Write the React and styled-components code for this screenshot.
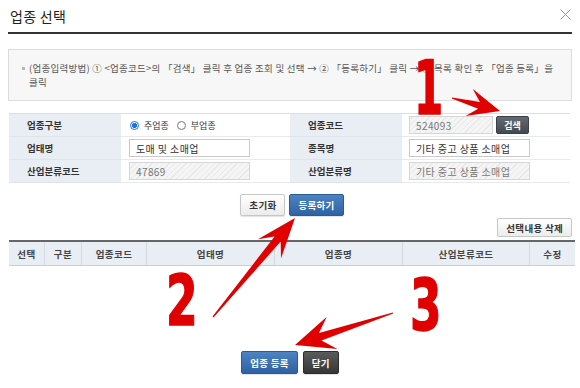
import React from 'react';
import styled, { createGlobalStyle } from 'styled-components';

const GlobalStyle = createGlobalStyle`
  body {
    margin: 0;
    background: #fff;
    font-family: "Noto Sans CJK KR", "Noto Sans", sans-serif;
  }
`;

// arrow drawn as one tapered polygon, tail -> tip
const arrowPoints = (x1, y1, x2, y2, headLen, headW, neckW) => {
  const dx = x2 - x1;
  const dy = y2 - y1;
  const len = Math.hypot(dx, dy);
  const ux = dx / len;
  const uy = dy / len;
  const nx = -uy;
  const ny = ux;
  const bx = x2 - ux * headLen;
  const by = y2 - uy * headLen;
  const kx = x2 - ux * headLen * 0.68;
  const ky = y2 - uy * headLen * 0.68;
  const pts = [
    [x1 + nx * 0.6, y1 + ny * 0.6],
    [kx + nx * neckW / 2, ky + ny * neckW / 2],
    [bx + nx * headW / 2, by + ny * headW / 2],
    [x2, y2],
    [bx - nx * headW / 2, by - ny * headW / 2],
    [kx - nx * neckW / 2, ky - ny * neckW / 2],
    [x1 - nx * 0.6, y1 - ny * 0.6],
  ];
  return pts.map(p => p.map(v => v.toFixed(1)).join(',')).join(' ');
};

const arrows = [
  [452, 98, 500, 111, 32, 28, 7],
  [213, 317, 295, 218, 40, 30, 8],
  [393, 313, 295, 345, 39, 34, 8],
];

const steps = [
  { n: '1', x: 414, y: 51, size: 75, sx: 0.56 },
  { n: '2', x: 166, y: 267, size: 69, sx: 0.66 },
  { n: '3', x: 410, y: 270, size: 71, sx: 0.64 },
];

const listCols = [
  ['선택', 35], ['구분', 36], ['업종코드', 64], ['업태명', 127],
  ['업종명', 127], ['산업분류코드', 126], ['수정', 45],
];

const App = () => (
  <>
    <GlobalStyle />
    <Page>
      <TitleBar>
        <Title>업종 선택</Title>
        <Close width="11" height="11" viewBox="0 0 11 11">
          <path d="M0.5 0.5 L10.5 10.5 M10.5 0.5 L0.5 10.5" stroke="#9a9a9a" strokeWidth="1" />
        </Close>
      </TitleBar>

      <Notice>
        <Bullet />
        <NoticeText>
          (업종입력방법) ① &lt;업종코드&gt;의 「검색」 클릭 후 업종 조회 및 선택 → ② 「등록하기」 클릭 → ③ 목록 확인 후 「업종 등록」을
          <br />
          클릭
        </NoticeText>
      </Notice>

      <FormTable>
        <colgroup>
          <col style={{ width: 112 }} />
          <col style={{ width: 169 }} />
          <col style={{ width: 112 }} />
          <col style={{ width: 168 }} />
        </colgroup>
        <tbody>
          <tr>
            <Th>업종구분</Th>
            <Td>
              <RadioGroup>
                <Radio $checked />
                <RadioLabel>주업종</RadioLabel>
                <Radio />
                <RadioLabel>부업종</RadioLabel>
              </RadioGroup>
            </Td>
            <Th>업종코드</Th>
            <Td $right>
              <Field>
                <Input $w={84} $locked readOnly value="524093" />
                <SearchButton>검색</SearchButton>
              </Field>
            </Td>
          </tr>
          <tr>
            <Th>업태명</Th>
            <Td>
              <Input $w={121} readOnly value="도매 및 소매업" />
            </Td>
            <Th>종목명</Th>
            <Td $right>
              <Input $w={121} readOnly value="기타 중고 상품 소매업" />
            </Td>
          </tr>
          <tr>
            <Th>산업분류코드</Th>
            <Td>
              <Input $w={121} $locked readOnly value="47869" />
            </Td>
            <Th>산업분류명</Th>
            <Td $right>
              <Input $w={121} $locked readOnly value="기타 중고 상품 소매업" />
            </Td>
          </tr>
        </tbody>
      </FormTable>

      <ButtonRow>
        <Button $tone="light">초기화</Button>
        <Button $tone="blue">등록하기</Button>
      </ButtonRow>

      <DeleteButton $tone="light">선택내용 삭제</DeleteButton>

      <ListTable>
        <thead>
          <tr>
            {listCols.map(([label, w]) => (
              <ListTh key={label} style={{ width: w }}>{label}</ListTh>
            ))}
          </tr>
        </thead>
      </ListTable>

      <Footer>
        <Button $tone="blue" $h={23}>업종 등록</Button>
        <Button $tone="dark" $h={23}>닫기</Button>
      </Footer>

      <Overlay width="580" height="388" viewBox="0 0 580 388">
        {arrows.map((a, i) => (
          <polygon key={i} points={arrowPoints(...a)} fill="#e10000" />
        ))}
      </Overlay>
      {steps.map(s => (
        <StepNumber key={s.n} $x={s.x} $y={s.y} $size={s.size} $sx={s.sx}>{s.n}</StepNumber>
      ))}
    </Page>
  </>
);

const Page = styled.div`
  position: relative;
  width: 580px;
  height: 388px;
  box-sizing: border-box;
  padding: 0 8px;
  display: flex;
  flex-direction: column;
  overflow: hidden;
`

const TitleBar = styled.div`
  flex: none;
  height: 32px;
  border-bottom: 2px solid #333;
  display: flex;
  align-items: center;
  justify-content: space-between;
  padding: 0 1px 0 2px;
`

const Title = styled.h1`
  margin: 0;
  font-size: 14px;
  font-weight: 400;
  color: #222;
  letter-spacing: 0.3px;
`

const Close = styled.svg`
  display: block;
  margin-top: -4px;
`

const Notice = styled.div`
  flex: none;
  margin-top: 15px;
  height: 52px;
  box-sizing: border-box;
  border: 1px solid #dcdcdc;
  background: #f7f7f7;
  padding: 11px 14px 0 13px;
  display: flex;
  align-items: flex-start;
  gap: 4px;
  overflow: hidden;
`

const Bullet = styled.span`
  flex: none;
  width: 3px;
  height: 3px;
  margin-top: 6px;
  background: #b5b5b5;
`

const NoticeText = styled.p`
  margin: 0;
  font-size: 9.5px;
  line-height: 14px;
  color: #555;
  letter-spacing: 0.26px;
  white-space: nowrap;
`

const FormTable = styled.table`
  flex: none;
  margin: 12px 0 0 1px;
  width: 561px;
  border-collapse: collapse;
  table-layout: fixed;
  border-top: 1px solid #d9dee7;
  border-bottom: 1px solid #d9dee7;
`

const Th = styled.th`
  height: 22px;
  padding: 0 0 0 18px;
  background: #e9edf4;
  text-align: left;
  font-size: 9.5px;
  font-weight: 700;
  color: #333;
  border-bottom: 1px solid #dfe3ea;
`

const Td = styled.td`
  height: 22px;
  padding: 0 0 0 ${p => (p.$right ? 7 : 8)}px;
  border-bottom: 1px solid #e6e9ee;
`

const RadioGroup = styled.div`
  display: flex;
  align-items: center;
`

const Radio = styled.span`
  width: 9px;
  height: 9px;
  box-sizing: border-box;
  border-radius: 50%;
  border: 1px solid ${p => (p.$checked ? '#1a73e8' : '#777')};
  background: ${p => (p.$checked ? 'radial-gradient(circle, #1a73e8 0 2.3px, #fff 2.6px)' : '#fff')};
  margin-left: 1px;
`

const RadioLabel = styled.span`
  font-size: 9px;
  color: #333;
  margin: 0 7px 0 5px;
`

const Field = styled.div`
  display: flex;
  align-items: center;
`

const Input = styled.input`
  display: block;
  width: ${p => p.$w}px;
  height: 18px;
  box-sizing: border-box;
  border: 1px solid ${p => (p.$locked ? '#d6d6d6' : '#c9c9c9')};
  padding: 0 6px;
  font-family: inherit;
  font-size: 10px;
  letter-spacing: 0.4px;
  color: ${p => (p.$locked ? '#777' : '#333')};
  background: ${p => (p.$locked
    ? 'repeating-linear-gradient(-45deg, #f5f5f5 0 3px, #e8e8e8 3px 4px)'
    : '#fff')};
  outline: none;
`

const SearchButton = styled.button`
  margin-left: 3px;
  width: 33px;
  height: 18px;
  padding: 0;
  border: 1px solid #3b4047;
  border-radius: 2px;
  background: linear-gradient(#646a73, #444950);
  color: #fff;
  font-family: inherit;
  font-size: 9px;
  font-weight: 700;
`

const tones = {
  light: 'background: linear-gradient(#ffffff, #ececec); border-color: #c6c6c6; color: #333;',
  blue: 'background: linear-gradient(#4d82c3, #2f62a2); border-color: #2c5a94; color: #fff;',
  dark: 'background: linear-gradient(#5a5a5a, #363636); border-color: #2c2c2c; color: #fff;',
};

const Button = styled.button`
  height: ${p => p.$h || 22}px;
  padding: 0 8px;
  border: 1px solid;
  border-radius: 2px;
  font-family: inherit;
  font-size: 9.5px;
  font-weight: 700;
  letter-spacing: 0.3px;
  box-shadow: 0 1px 1px rgba(0, 0, 0, 0.12);
  ${p => tones[p.$tone]}
`

const ButtonRow = styled.div`
  flex: none;
  margin-top: 11px;
  display: flex;
  justify-content: center;
  gap: 4px;
  padding-left: 4px;
`

const DeleteButton = styled(Button)`
  flex: none;
  align-self: flex-end;
  margin-top: 2px;
  height: 19px;
  box-shadow: none;
`

const ListTable = styled.table`
  flex: none;
  margin: 3px 0 0 1px;
  width: 560px;
  border-collapse: collapse;
  table-layout: fixed;
  border-top: 2px solid #666;
`

const ListTh = styled.th`
  height: 23px;
  padding: 0;
  background: #e9edf4;
  border-right: 1px solid #d3d9e3;
  border-bottom: 1px solid #c9ced8;
  font-size: 9.5px;
  font-weight: 700;
  color: #444;
  letter-spacing: 0.4px;
  &:last-child {
    border-right: none;
  }
`

const Footer = styled.div`
  margin-top: auto;
  margin-bottom: 14px;
  display: flex;
  justify-content: center;
  gap: 5px;
`

const Overlay = styled.svg`
  position: absolute;
  left: 0;
  top: 0;
  pointer-events: none;
`

const StepNumber = styled.span`
  position: absolute;
  left: ${p => p.$x}px;
  top: ${p => p.$y}px;
  font-family: "DejaVu Sans", sans-serif;
  font-weight: 700;
  font-size: ${p => p.$size}px;
  line-height: 1;
  color: #e10000;
  -webkit-text-stroke: 1.5px #e10000;
  transform: scaleX(${p => p.$sx});
  transform-origin: left top;
`

export default App;
